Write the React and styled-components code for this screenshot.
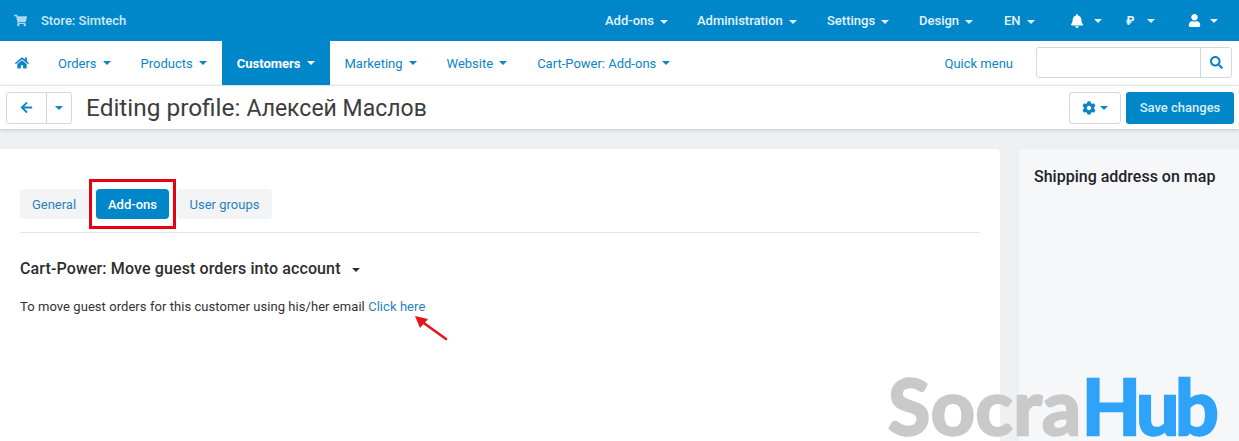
import React from "react";
import styled, { createGlobalStyle } from "styled-components";
import { FaShoppingCart, FaHome, FaBell, FaUser, FaArrowLeft, FaCog, FaSearch } from "react-icons/fa";

const GlobalStyle = createGlobalStyle`
    html, body {
        margin: 0;
        padding: 0;
        height: 441px;
        overflow: hidden;
        background: #eef0f1;
        font-family: Roboto, "Liberation Sans", sans-serif;
    }
`;

const topLinks = [
    { label: "Add-ons", width: 92 },
    { label: "Administration", width: 130 },
    { label: "Settings", width: 92 },
    { label: "Design", width: 85 },
    { label: "EN", width: 66 },
];

const mainLinks = ["Orders", "Products", "Customers", "Marketing", "Website", "Cart-Power: Add-ons"];

export default function App() {
    return (
        <Page>
            <GlobalStyle />
            <TopBar>
                <Store>
                    <FaShoppingCart size={13} color="#a9d8f0" />
                    <span>Store: Simtech</span>
                </Store>
                <TopMenu>
                    {topLinks.map((link) => (
                        <TopLink key={link.label} $width={link.width}>
                            {link.label}
                            <Caret />
                        </TopLink>
                    ))}
                    <TopIcon $width={56} $inner={32}><FaBell size={14} color="#fff" /><Caret /></TopIcon>
                    <TopIcon $width={62} $inner={29}><Rouble>₽</Rouble><Caret /></TopIcon>
                    <TopIcon $width={30} $inner={30}><FaUser size={13} color="#fff" /><Caret /></TopIcon>
                </TopMenu>
            </TopBar>
            <MainNav>
                <HomeLink><FaHome size={14} /></HomeLink>
                {mainLinks.map((link) => (
                    <MainLink key={link} $active={link === "Customers"}>
                        {link}
                        <Caret />
                    </MainLink>
                ))}
                <QuickMenu>Quick menu</QuickMenu>
                <SearchBox>
                    <SearchInput />
                    <SearchButton><FaSearch size={13} /></SearchButton>
                </SearchBox>
            </MainNav>
            <Toolbar>
                <BackGroup>
                    <BackButton><FaArrowLeft size={13} /></BackButton>
                    <BackMenu><Caret /></BackMenu>
                </BackGroup>
                <PageTitle>Editing profile: <CustomerName>Алексей Маслов</CustomerName></PageTitle>
                <GearButton><FaCog size={14} /><Caret /></GearButton>
                <SaveButton>Save changes</SaveButton>
            </Toolbar>
            <Content>
                <Panel>
                    <Tabs>
                        <Tab $width={68}>General</Tab>
                        <Tab $width={73} $active>Add-ons</Tab>
                        <Tab $width={95}>User groups</Tab>
                    </Tabs>
                    <SectionTitle>
                        Cart-Power: Move guest orders into account
                        <DarkCaret />
                    </SectionTitle>
                    <Message>
                        To move guest orders for this customer using his/her email <Link>Click here</Link>
                    </Message>
                </Panel>
                <Sidebar>
                    <SidebarTitle>Shipping address on map</SidebarTitle>
                </Sidebar>
            </Content>
            <RedBox />
            <Arrow viewBox="0 0 40 30" width="40" height="30">
                <line x1="34" y1="26" x2="9" y2="8" stroke="#e8141c" strokeWidth="2.6" strokeLinecap="round" />
                <polygon points="3,3 16,6 8,15" fill="#e8141c" />
            </Arrow>
            <Watermark>Socra<em>Hub</em></Watermark>
        </Page>
    );
}

const Page = styled.div`
    position: relative;
    width: 1239px;
    height: 441px;
    overflow: hidden;
`;

const Caret = styled.i`
    display: inline-block;
    width: 0;
    height: 0;
    margin-left: 6px;
    border-top: 4px solid currentColor;
    border-left: 4px solid transparent;
    border-right: 4px solid transparent;
    vertical-align: middle;
`;

const DarkCaret = styled(Caret)`
    margin-left: 11px;
    color: #2d2d2d;
`;

const TopBar = styled.div`
    display: flex;
    align-items: center;
    justify-content: space-between;
    height: 41px;
    padding: 0 21px 0 14px;
    background: #0087ca;
`;

const Store = styled.div`
    display: flex;
    align-items: center;
    gap: 14px;
    color: #cfe9f7;
    font-size: 13px;
    font-weight: 500;
`;

const TopMenu = styled.div`
    display: flex;
    align-items: center;
`;

const TopLink = styled.div`
    width: ${(props) => props.$width}px;
    color: #e4f4fc;
    font-size: 13px;
    font-weight: 500;
    white-space: nowrap;
`;

const TopIcon = styled.div`
    display: flex;
    align-items: center;
    justify-content: space-between;
    width: ${(props) => props.$inner}px;
    margin-right: ${(props) => props.$width - props.$inner}px;
    color: #e4f4fc;
    i { margin-left: 0; }
`;

const Rouble = styled.span`
    color: #e4f4fc;
    font-size: 12px;
    font-weight: 700;
`;

const MainNav = styled.div`
    display: flex;
    align-items: stretch;
    height: 45px;
    background: #fff;
    border-bottom: 1px solid #eceeef;
    box-sizing: border-box;
    color: #0a85c7;
    font-size: 13px;
`;

const HomeLink = styled.div`
    display: flex;
    align-items: center;
    padding: 0 14px 0 15px;
`;

const MainLink = styled.div`
    display: flex;
    align-items: center;
    padding: 0 15px;
    white-space: nowrap;
    background: ${(props) => (props.$active ? "#0087ca" : "transparent")};
    color: ${(props) => (props.$active ? "#fff" : "#0a85c7")};
    font-weight: ${(props) => (props.$active ? 700 : 400)};
`;

const QuickMenu = styled.div`
    display: flex;
    align-items: center;
    margin-left: auto;
    margin-right: 23px;
`;

const SearchBox = styled.div`
    display: flex;
    align-self: center;
    width: 196px;
    height: 31px;
    margin: -1px 7px 0 0;
    border: 1px solid #d5d8da;
    border-radius: 3px;
    box-sizing: border-box;
`;

const SearchInput = styled.div`
    flex: 1;
`;

const SearchButton = styled.div`
    display: flex;
    align-items: center;
    justify-content: center;
    width: 30px;
    border-left: 1px solid #d5d8da;
`;

const Toolbar = styled.div`
    display: flex;
    align-items: center;
    height: 43px;
    padding: 0 5px 0 6px;
    background: #fff;
    box-shadow: 0 1px 4px rgba(0, 0, 0, 0.18);
    position: relative;
`;

const BackGroup = styled.div`
    display: flex;
    height: 32px;
    border: 1px solid #d5d8da;
    border-radius: 3px;
    box-sizing: border-box;
    color: #0a85c7;
`;

const BackButton = styled.div`
    display: flex;
    align-items: center;
    justify-content: center;
    width: 39px;
    border-right: 1px solid #d5d8da;
`;

const BackMenu = styled.div`
    display: flex;
    align-items: center;
    justify-content: center;
    width: 24px;
    i { margin-left: 0; }
`;

const PageTitle = styled.h1`
    flex: 1;
    margin: 0 0 0 14px;
    color: #3d3d3d;
    font-size: 24.4px;
    font-weight: 400;
    white-space: nowrap;
`;

const CustomerName = styled.span`
    font-size: 23px;
`;

const GearButton = styled.div`
    display: flex;
    align-items: center;
    justify-content: center;
    width: 52px;
    height: 32px;
    margin-right: 5px;
    border: 1px solid #d5d8da;
    border-radius: 3px;
    box-sizing: border-box;
    color: #0a85c7;
    i { margin-left: 4px; }
`;

const SaveButton = styled.div`
    display: flex;
    align-items: center;
    justify-content: center;
    width: 108px;
    height: 32px;
    border-radius: 3px;
    background: #0087ca;
    color: #d9eff9;
    font-size: 13px;
    font-weight: 500;
`;

const Content = styled.div`
    display: flex;
    gap: 19px;
    padding-top: 20px;
`;

const Panel = styled.div`
    width: 1000px;
    height: 300px;
    padding: 40px 20px 0;
    box-sizing: border-box;
    background: #fff;
    border-radius: 0 4px 0 0;
`;

const Tabs = styled.div`
    display: flex;
    gap: 8px;
    height: 43px;
    border-bottom: 1px solid #e4e6e7;
`;

const Tab = styled.div`
    display: flex;
    align-items: center;
    justify-content: center;
    width: ${(props) => props.$width}px;
    height: 30px;
    border-radius: 4px;
    background: ${(props) => (props.$active ? "#0087ca" : "#f3f4f5")};
    color: ${(props) => (props.$active ? "#fff" : "#2b82bd")};
    font-size: 13px;
    font-weight: ${(props) => (props.$active ? 500 : 400)};
`;

const SectionTitle = styled.div`
    margin-top: 27px;
    color: #2d2d2d;
    font-size: 16px;
    font-weight: 500;
    line-height: 18px;
    letter-spacing: 0.12px;
`;

const Message = styled.div`
    margin-top: 21px;
    color: #333;
    font-size: 13px;
    line-height: 16px;
    letter-spacing: 0.06px;
`;

const Link = styled.span`
    color: #2b82bd;
`;

const Sidebar = styled.div`
    flex: 1;
    height: 300px;
    padding: 19px 15px;
    box-sizing: border-box;
    background: #f6f7f8;
    border-radius: 4px 0 0 0;
`;

const SidebarTitle = styled.div`
    color: #1f1f2b;
    font-size: 16px;
    font-weight: 500;
    line-height: 18px;
`;

const RedBox = styled.div`
    position: absolute;
    left: 89px;
    top: 179px;
    width: 87px;
    height: 50px;
    border: 3px solid #e60012;
    box-sizing: border-box;
`;

const Arrow = styled.svg`
    position: absolute;
    left: 412px;
    top: 313px;
`;

const Watermark = styled.div`
    position: absolute;
    left: 888px;
    top: 370px;
    color: #c9c9c9;
    font-family: Lato, sans-serif;
    font-size: 77px;
    font-weight: 700;
    line-height: 70px;
    letter-spacing: 0.6px;
    white-space: nowrap;
    -webkit-text-stroke: 2.5px currentColor;
    em {
        color: #2ea3f9;
        font-style: normal;
        letter-spacing: -4.4px;
    }
`;
